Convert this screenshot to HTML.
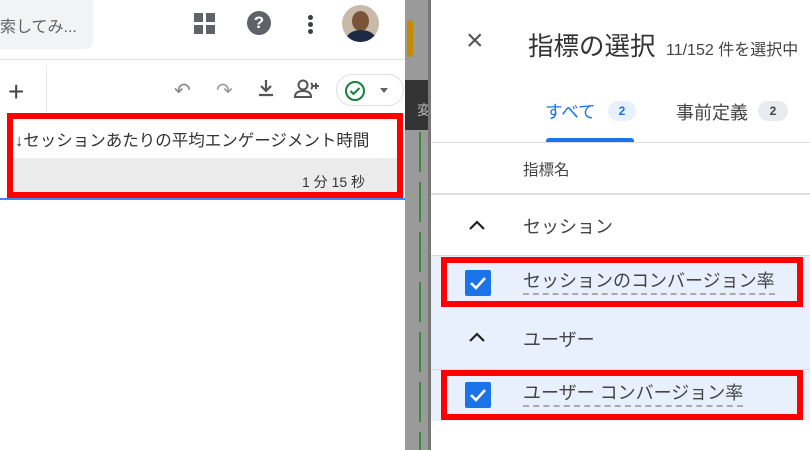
<!DOCTYPE html>
<html><head><meta charset="utf-8"><style>
*{margin:0;padding:0;box-sizing:border-box}
body{width:810px;height:450px;overflow:hidden;position:relative;background:#fff;font-family:"Liberation Sans","Noto Sans CJK JP",sans-serif;color:#3c4043}
.a{position:absolute;white-space:nowrap}
</style></head><body>
<!-- left -->
<div class="a" style="left:0;top:0;width:93px;height:49px;background:#f1f3f4;border-radius:0 0 8px 0"></div>
<div class="a" style="left:0;top:13px;font-size:16px;color:#5f6368">索してみ...</div>
<div class="a" style="left:194px;top:13px;width:9px;height:9px;background:#5f6368;box-shadow:12px 0 #5f6368,0 12px #5f6368,12px 12px #5f6368"></div>
<div class="a" style="left:247px;top:11px;width:24px;height:24px;border-radius:50%;background:#5f6368;color:#fff;font-weight:bold;font-size:17px;text-align:center;line-height:24px">?</div>
<div class="a" style="left:308px;top:15px;width:5px;height:5px;border-radius:50%;background:#3c4043;box-shadow:0 7px #3c4043,0 14px #3c4043"></div>
<div class="a" style="left:342px;top:5px;width:37px;height:37px;border-radius:50%;background:#c9b9a8;overflow:hidden"><div class="a" style="left:10px;top:6px;width:17px;height:20px;border-radius:50%;background:#7a5438"></div><div class="a" style="left:4px;top:25px;width:30px;height:20px;border-radius:50%;background:#1c2a44"></div></div>
<div class="a" style="left:0;top:59px;width:405px;height:1px;background:#e0e0e0"></div>
<div class="a" style="left:46px;top:66px;width:1px;height:46px;background:#e8e8e8"></div>
<div class="a" style="left:8px;top:78px;font-size:28px;color:#444;line-height:28px">+</div>
<div class="a" style="left:174px;top:78px;font-size:20px;color:#888">↶</div>
<div class="a" style="left:216px;top:78px;font-size:20px;color:#999">↷</div>
<svg class="a" style="left:256px;top:78px" width="20" height="20"><path d="M10 2v11M5 8l5 5 5-5M3 17h14" stroke="#555" stroke-width="2.2" fill="none"/></svg>
<svg class="a" style="left:294px;top:79px" width="28" height="20"><circle cx="9" cy="6" r="4.5" stroke="#555" stroke-width="2" fill="none"/><path d="M1 18c0-5 4-6 8-6s8 1 8 6zM17 4a4 4 0 010 6" stroke="#555" stroke-width="2" fill="none"/><path d="M22 4v6M19 7h6" stroke="#555" stroke-width="2"/></svg>
<div class="a" style="left:336px;top:74px;width:68px;height:32px;border:1px solid #e0e0e0;border-radius:16px"></div>
<svg class="a" style="left:344px;top:80px" width="22" height="22"><circle cx="11" cy="11" r="9" stroke="#188038" stroke-width="2" fill="none"/><path d="M6.5 11l3 3 6-6" stroke="#188038" stroke-width="2" fill="none"/></svg>
<div class="a" style="left:380px;top:88px;border:4px solid transparent;border-top:5px solid #5f6368"></div>
<div class="a" style="left:7px;top:113px;width:396px;height:85px;border:6px solid #f00;background:#fff"></div>
<div class="a" style="left:13px;top:158px;width:384px;height:34px;background:#ececec"></div>
<div class="a" style="left:15px;top:127px;font-size:16.5px;color:#333">↓セッションあたりの平均エンゲージメント時間</div>
<div class="a" style="left:302px;top:172px;font-size:14px;color:#333">1 分 15 秒</div>
<div class="a" style="left:0;top:198px;width:405px;height:2px;background:#4285f4"></div>
<!-- strip -->
<div class="a" style="left:405px;top:0;width:26px;height:450px;background:#9a9a9a"></div>
<div class="a" style="left:407px;top:20px;width:6px;height:37px;background:#c68a00;border-radius:3px"></div>
<div class="a" style="left:405px;top:80px;width:26px;height:50px;background:#333;color:#bbb;font-size:14px;padding:20px 0 0 12px">変</div>
<div class="a" style="left:419px;top:132px;width:2px;height:318px;background:repeating-linear-gradient(#3c8a3c 0 40px,#9a9a9a 40px 50px)"></div>
<div class="a" style="left:428px;top:0;width:3px;height:450px;background:#777"></div>
<!-- right -->
<div class="a" style="left:466px;top:24px;font-size:30px;color:#555;font-weight:300">×</div>
<div class="a" style="left:528px;top:26px;font-size:25.5px;color:#333">指標の選択</div>
<div class="a" style="left:666px;top:36px;font-size:16px;color:#444">11/152 件を選択中</div>
<div class="a" style="left:545px;top:99px;font-size:17.5px;color:#1a73e8">すべて</div>
<div class="a" style="left:608px;top:101px;width:28px;height:20px;border-radius:10px;background:#e8f0fe;color:#1a73e8;font-size:12px;font-weight:bold;text-align:center;line-height:20px">2</div>
<div class="a" style="left:546px;top:138px;width:88px;height:4px;background:#1a73e8;border-radius:3px 3px 0 0"></div>
<div class="a" style="left:676px;top:99px;font-size:18px;color:#444">事前定義</div>
<div class="a" style="left:758px;top:101px;width:30px;height:20px;border-radius:10px;background:#e8eaed;color:#444;font-size:12px;font-weight:bold;text-align:center;line-height:20px">2</div>
<div class="a" style="left:431px;top:142px;width:379px;height:1px;background:#ddd"></div>
<div class="a" style="left:523px;top:158px;font-size:15.5px;color:#444">指標名</div>
<div class="a" style="left:431px;top:193px;width:379px;height:2px;background:#ddd"></div>
<svg class="a" style="left:467px;top:219px" width="20" height="12"><path d="M3 10l7-7 7 7" stroke="#222" stroke-width="2.2" fill="none"/></svg>
<div class="a" style="left:523px;top:213px;font-size:18px;color:#444">セッション</div>
<div class="a" style="left:431px;top:255px;width:379px;height:166px;background:#e8f0fe"></div>
<div class="a" style="left:431px;top:255px;width:379px;height:1px;background:#d5d9e0"></div>
<div class="a" style="left:431px;top:369px;width:379px;height:1px;background:#d5d9e0"></div>
<div class="a" style="left:441px;top:257px;width:362px;height:50px;border:6px solid #f00"></div>
<div class="a" style="left:441px;top:370px;width:362px;height:50px;border:6px solid #f00"></div>
<svg class="a" style="left:465px;top:270px" width="26" height="26"><rect width="26" height="26" rx="2" fill="#1a73e8"/><path d="M6 13l5 5 9-10" stroke="#fff" stroke-width="2.6" fill="none"/></svg>
<svg class="a" style="left:465px;top:382px" width="26" height="26"><rect width="26" height="26" rx="2" fill="#1a73e8"/><path d="M6 13l5 5 9-10" stroke="#fff" stroke-width="2.6" fill="none"/></svg>
<div class="a" style="left:523px;top:270px;font-size:18px;color:#444;border-bottom:2px dashed #aaa;line-height:23px">セッションのコンバージョン率</div>
<svg class="a" style="left:467px;top:331px" width="20" height="12"><path d="M3 10l7-7 7 7" stroke="#222" stroke-width="2.2" fill="none"/></svg>
<div class="a" style="left:523px;top:326px;font-size:18px;color:#444">ユーザー</div>
<div class="a" style="left:523px;top:382px;font-size:18px;color:#444;border-bottom:2px dashed #aaa;line-height:23px">ユーザー コンバージョン率</div>
</body></html>
